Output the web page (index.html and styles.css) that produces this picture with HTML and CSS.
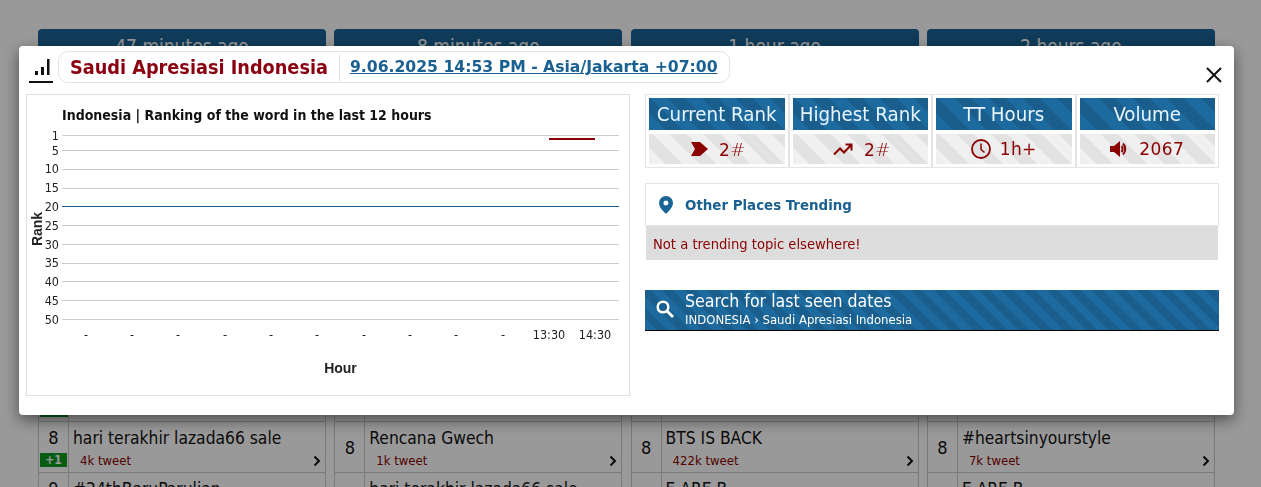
FILE: index.html
```html
<!DOCTYPE html>
<html lang="en">
<head>
<meta charset="utf-8">
<title>Saudi Apresiasi Indonesia</title>
<link rel="stylesheet" href="styles.css">
</head>
<body>
<main class="board">
  <section class="card">
    <div class="card-head">47 minutes ago</div>
    <div class="hidden-rows"></div>
    <div class="row"><div class="num"><span class="badge">+1</span></div><div class="info"><svg class="chev" viewBox="0 0 8 12"><path d="M1.500 1.500 6 6l-4.500 4.500"/></svg></div></div>
    <div class="row"><div class="num num-top"><span>8</span><span class="badge">+1</span></div><div class="info"><div class="name">hari terakhir lazada66 sale</div><div class="vol">4k tweet</div><svg class="chev" viewBox="0 0 8 12"><path d="M1.500 1.500 6 6l-4.500 4.500"/></svg></div></div>
    <div class="row"><div class="num num-top"><span>9</span></div><div class="info"><div class="name">#24thBaruParulian</div></div></div>
  </section>
  <section class="card">
    <div class="card-head">8 minutes ago</div>
    <div class="hidden-rows"></div>
    <div class="row"><div class="num"></div><div class="info"><svg class="chev" viewBox="0 0 8 12"><path d="M1.500 1.500 6 6l-4.500 4.500"/></svg></div></div>
    <div class="row"><div class="num">8</div><div class="info"><div class="name">Rencana Gwech</div><div class="vol">1k tweet</div><svg class="chev" viewBox="0 0 8 12"><path d="M1.500 1.500 6 6l-4.500 4.500"/></svg></div></div>
    <div class="row"><div class="num"></div><div class="info"><div class="name">hari terakhir lazada66 sale</div></div></div>
  </section>
  <section class="card">
    <div class="card-head">1 hour ago</div>
    <div class="hidden-rows"></div>
    <div class="row"><div class="num"></div><div class="info"><svg class="chev" viewBox="0 0 8 12"><path d="M1.500 1.500 6 6l-4.500 4.500"/></svg></div></div>
    <div class="row"><div class="num">8</div><div class="info"><div class="name">BTS IS BACK</div><div class="vol">422k tweet</div><svg class="chev" viewBox="0 0 8 12"><path d="M1.500 1.500 6 6l-4.500 4.500"/></svg></div></div>
    <div class="row"><div class="num"></div><div class="info"><div class="name">E ARE B</div></div></div>
  </section>
  <section class="card">
    <div class="card-head">2 hours ago</div>
    <div class="hidden-rows"></div>
    <div class="row"><div class="num"></div><div class="info"><svg class="chev" viewBox="0 0 8 12"><path d="M1.500 1.500 6 6l-4.500 4.500"/></svg></div></div>
    <div class="row"><div class="num">8</div><div class="info"><div class="name">#heartsinyourstyle</div><div class="vol">7k tweet</div><svg class="chev" viewBox="0 0 8 12"><path d="M1.500 1.500 6 6l-4.500 4.500"/></svg></div></div>
    <div class="row"><div class="num"></div><div class="info"><div class="name">E ARE B</div></div></div>
  </section>
</main>

<div class="backdrop"></div>

<div class="modal">
  <header class="modal-head">
    <div class="chart-icon">
      <svg viewBox="0 0 24 24" width="24" height="24"><path d="M6 16h3v-4H6zM12 16h3V8h-3zM18 16h2.500V0H18zM0 22h24v2H0z" fill="#111"/></svg>
    </div>
    <div class="pill">
      <h1 class="title">Saudi Apresiasi Indonesia</h1>
      <a class="date" href="#">9.06.2025 14:53 PM - Asia/Jakarta +07:00</a>
    </div>
    <button class="close" aria-label="Close">
      <svg viewBox="0 0 16 16" width="16" height="16"><path d="M1 1l14 14M15 1 1 15" stroke="#111" stroke-width="2" fill="none"/></svg>
    </button>
  </header>
  <div class="modal-body">
    <div class="chart-box">
      <svg class="chart" width="602" height="300" viewBox="27 95 602 300">
        <text class="chart-title" x="62" y="120">Indonesia | Ranking of the word in the last 12 hours</text>
        <g class="grid">
          <path d="M62 135.500h557M62 150.500h557M62 169.500h557M62 188.500h557M62 225.500h557M62 244.500h557M62 263.500h557M62 281.500h557M62 300.500h557M62 319.500h557"/>
        </g>
        <path d="M62 206.500h557" stroke="#1a5f8c" fill="none"/>
        <path d="M549 139h46" stroke="#8b0000" stroke-width="2" fill="none"/>
        <g class="ylab">
          <text x="59" y="140">1</text><text x="59" y="155">5</text><text x="59" y="173">10</text><text x="59" y="192">15</text><text x="59" y="211">20</text><text x="59" y="230">25</text><text x="59" y="249">30</text><text x="59" y="267">35</text><text x="59" y="286">40</text><text x="59" y="305">45</text><text x="59" y="324">50</text>
        </g>
        <g class="xlab">
          <text x="86" y="339">-</text><text x="132" y="339">-</text><text x="178" y="339">-</text><text x="225" y="339">-</text><text x="271" y="339">-</text><text x="317" y="339">-</text><text x="364" y="339">-</text><text x="410" y="339">-</text><text x="456" y="339">-</text><text x="503" y="339">-</text><text x="549" y="339">13:30</text><text x="595" y="339">14:30</text>
        </g>
        <text class="axis" x="340.500" y="373" text-anchor="middle">Hour</text>
        <text class="axis" transform="translate(42 229) rotate(-90)" text-anchor="middle">Rank</text>
      </svg>
    </div>
    <div class="side">
      <div class="stats">
        <div class="stat">
          <div class="stat-head stripes-blue">Current Rank</div>
          <div class="stat-val rank-val stripes-gray"><svg viewBox="0 0 17 14" width="17" height="14"><path d="M0 0h9l8 7-8 7H0l4-7z" fill="#8b0000"/></svg><span>2<i>#</i></span></div>
        </div>
        <div class="stat">
          <div class="stat-head stripes-blue">Highest Rank</div>
          <div class="stat-val rank-val stripes-gray"><svg viewBox="0 0 20 13" width="20" height="13"><path d="M1 11.500 7 5.500l4 4 7-7.500M12.500 1.500h6v6" stroke="#8b0000" stroke-width="2" fill="none"/></svg><span>2<i>#</i></span></div>
        </div>
        <div class="stat">
          <div class="stat-head stripes-blue">TT Hours</div>
          <div class="stat-val stripes-gray"><svg viewBox="0 0 20 20" width="20" height="20"><circle cx="10" cy="10" r="9" stroke="#8b0000" stroke-width="1.800" fill="none"/><path d="M10 4.500V10.500l3.500 3" stroke="#8b0000" stroke-width="1.500" fill="none"/></svg><span>1h+</span></div>
        </div>
        <div class="stat">
          <div class="stat-head stripes-blue">Volume</div>
          <div class="stat-val stripes-gray"><svg viewBox="0 0 20 16" width="20" height="16"><path d="M0 5h4l6-5v16l-6-5H0z" fill="#8b0000"/><path d="M13 2.500c3 3 3 8 0 11M11.500 5c1.500 1.500 1.500 4.500 0 6" stroke="#8b0000" stroke-width="2" fill="none"/></svg><span>2067</span></div>
        </div>
      </div>
      <div class="places">
        <svg viewBox="0 0 14 18" width="14" height="18"><path fill-rule="evenodd" d="M7 0a7 7 0 0 1 7 7c0 4-4 8-7 11-3-3-7-7-7-11a7 7 0 0 1 7-7zm0 4.500a2.500 2.500 0 1 0 0 5 2.500 2.500 0 0 0 0-5z" fill="#1a6496"/></svg>
        <span>Other Places Trending</span>
      </div>
      <div class="no-trend">Not a trending topic elsewhere!</div>
      <a class="search" href="#">
        <svg viewBox="0 0 18 18" width="18" height="18"><circle cx="7" cy="7" r="5.300" stroke="#fff" stroke-width="2.500" fill="none"/><path d="M11 11l6 6" stroke="#fff" stroke-width="2.800"/></svg>
        <span class="search-text">
          <span class="search-main">Search for last seen dates</span>
          <span class="search-sub">INDONESIA › Saudi Apresiasi Indonesia</span>
        </span>
      </a>
    </div>
  </div>
</div>
</body>
</html>
```

FILE: styles.css
```css
* { box-sizing: border-box; }
html, body { margin: 0; height: 487px; overflow: hidden; }
body { background: #fff; font-family: "DejaVu Sans Condensed", "DejaVu Sans", sans-serif; color: #111; }

.board {
  display: grid;
  grid-template-columns: repeat(4, 288px);
  column-gap: 8.300px;
  padding: 29px 0 0 38px;
}
.card-head {
  height: 36px;
  border-radius: 4px 4px 0 0;
  background: #1a6496;
  color: #fff;
  font-size: 19px;
  line-height: 35px;
  text-align: center;
}
.hidden-rows { height: 306px; }
.row {
  display: flex;
  height: 51px;
  border: 1px solid #ccc;
  border-top: 0;
}
.num {
  width: 30px;
  flex: none;
  border-right: 1px solid #ccc;
  display: flex;
  flex-direction: column;
  align-items: center;
  justify-content: center;
  font-size: 18px;
}
.num-top { justify-content: flex-start; padding-top: 5px; gap: 4px; line-height: 22px; }
.badge {
  align-self: stretch;
  margin: auto 0 4px 1px;
  background: #109a20;
  color: #fff;
  font-size: 12px;
  font-weight: bold;
  line-height: 14px;
  height: 14px;
  text-align: center;
}
.num-top .badge { margin: 0 1px 0 1px; }
.info { position: relative; flex: 1; padding: 4px 0 0 4px; min-width: 0; }
.name { font-size: 17.300px; line-height: 24px; white-space: nowrap; }
.vol { font-size: 13px; line-height: 18px; margin: 2px 0 0 7px; color: #8b0000; }
.chev {
  position: absolute;
  right: 4px;
  bottom: 5px;
  width: 8px;
  height: 12px;
  fill: none;
  stroke: #111;
  stroke-width: 2;
}

.backdrop { position: fixed; inset: 0; background: rgba(0, 0, 0, .4); }

.modal {
  position: fixed;
  left: 19px;
  top: 46px;
  width: 1215px;
  height: 369px;
  background: #fff;
  border-radius: 4px;
  box-shadow: 0 5px 15px rgba(0, 0, 0, .5);
  padding: 5px 15px 0 7px;
}
.modal-head { display: flex; align-items: flex-start; height: 43px; }
.chart-icon { width: 24px; height: 24px; margin: 8px 5px 0 3px; flex: none; }
.chart-icon svg { display: block; }
.pill {
  display: flex;
  align-items: center;
  height: 32px;
  padding: 0 11px;
  border: 1px solid #e3e3e3;
  border-radius: 10px;
}
.title {
  margin: 1px 0 0;
  padding-right: 11px;
  border-right: 1px solid #ddd;
  color: #8b0011;
  font-size: 19.700px;
  line-height: 26px;
  font-weight: bold;
}
.date {
  margin: 0 0 1px 10px;
  color: #1a6090;
  font-family: "DejaVu Sans", sans-serif;
  font-size: 15.650px;
  font-weight: bold;
  text-decoration: underline;
}
.close {
  margin: 16px -3px 0 auto;
  padding: 0;
  border: 0;
  background: none;
  line-height: 0;
}

.modal-body { display: flex; gap: 15px; }
.chart-box {
  width: 604px;
  height: 302px;
  border: 1px solid #e0e0e0;
  flex: none;
}
.chart { display: block; }
.chart-title { font-size: 14px; font-weight: bold; fill: #111; }
.grid path { stroke: #ccc; fill: none; }
.ylab text { font-size: 12.500px; text-anchor: end; fill: #222; }
.xlab text { font-size: 12.500px; text-anchor: middle; fill: #222; }
.axis { font-family: "Liberation Sans", sans-serif; font-size: 14px; font-weight: bold; fill: #222; }

.side { width: 574px; flex: none; }
.stats { display: grid; grid-template-columns: repeat(4, 1fr); }
.stat { border: 1px solid #e4e4e4; padding: 3px; height: 74px; }
.stat-head {
  height: 32px;
  color: #e8f5ff;
  font-size: 20.300px;
  line-height: 32px;
  text-align: center;
  white-space: nowrap;
}
.stat-val {
  height: 30px;
  margin-top: 4px;
  display: flex;
  align-items: center;
  justify-content: center;
  gap: 9px;
  color: #8b0000;
  font-family: "DejaVu Sans", sans-serif;
  font-size: 17px;
  letter-spacing: .4px;
}
.rank-val { gap: 11px; padding-left: 3px; }
.rank-val i { letter-spacing: 0; font-size: 18px; }
.stat-val i { font-style: normal; font-weight: 300; }
.stripes-blue {
  background: repeating-linear-gradient(45deg, #1c6a9e 0 12px, #195e8c 12px 24px);
}
.stripes-gray {
  background: repeating-linear-gradient(45deg, #f0f0f0 0 12px, #e2e2e2 12px 24px);
}

.places {
  display: flex;
  align-items: center;
  gap: 12px;
  height: 43px;
  margin-top: 15px;
  padding-left: 13px;
  border: 1px solid #e4e4e4;
  color: #1a6090;
  font-size: 14.900px;
  font-weight: bold;
}
.no-trend {
  height: 34px;
  margin: 0 1px;
  padding-left: 7px;
  background: #ddd;
  color: #8b0000;
  font-size: 14.600px;
  line-height: 35px;
}
.search {
  display: flex;
  align-items: center;
  gap: 11px;
  height: 41px;
  margin-top: 30px;
  padding: 0 0 3px 11px;
  border-bottom: 1px solid #000;
  background: repeating-linear-gradient(45deg, #1c6a9e 0 8px, #195e8c 8px 16px);
  color: #fff;
  text-decoration: none;
}
.search-text { display: flex; flex-direction: column; }
.search-main { font-size: 17.600px; line-height: 21px; }
.search-sub { font-size: 13px; line-height: 15px; }
```
